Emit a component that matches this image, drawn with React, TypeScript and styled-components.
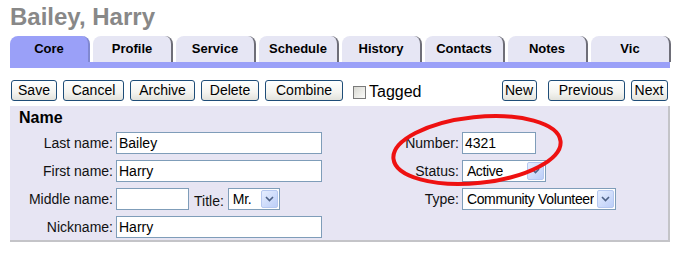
import styled, { createGlobalStyle } from "styled-components";

const GlobalStyle = createGlobalStyle`
  body {
    margin: 0;
    background: #fff;
    font-family: "Liberation Sans", Arial, sans-serif;
  }
`;

const Page = styled.div`
  width: 680px;
  height: 255px;
  padding: 0 0 0 10px;
  box-sizing: border-box;
  position: relative;
`;

const Title = styled.h1`
  margin: 0;
  height: 36px;
  font-size: 24px;
  line-height: 36px;
  font-weight: bold;
  color: #888;
  position: relative;
  top: -1px;
`;

const TabRow = styled.div`
  display: flex;
  gap: 3px;
  height: 26px;
`;

const Tab = styled.div<{ $active?: boolean }>`
  width: 80px;
  box-sizing: border-box;
  border-radius: 8px 8px 0 0;
  background: ${(p) => (p.$active ? "#9aa0f8" : "#e6e6f4")};
  border-right: 2px solid ${(p) => (p.$active ? "#8088d0" : "#6e6e78")};
  display: flex;
  align-items: center;
  justify-content: center;
  font-size: 13px;
  font-weight: bold;
  color: #000;
  padding-bottom: 1px;
`;

const TabBar = styled.div`
  width: 660px;
  height: 6px;
  background: #9aa0f8;
`;

const Toolbar = styled.div`
  display: flex;
  align-items: center;
  margin-top: 12px;
  height: 21px;
`;

const Group = styled.div<{ $gap: number }>`
  display: flex;
  align-items: center;
  gap: ${(p) => p.$gap}px;
`;

const Button = styled.button<{ $w: number }>`
  width: ${(p) => p.$w}px;
  height: 21px;
  padding: 0 0 1px;
  border: 1px solid #1f4d78;
  border-radius: 3px;
  background: linear-gradient(#ffffff, #f4f4f0 60%, #e2e2dc);
  font-family: "Liberation Sans", Arial, sans-serif;
  font-size: 14px;
  color: #000;
`;

const CheckLabel = styled.label`
  display: flex;
  align-items: center;
  gap: 3px;
  font-size: 16px;
  margin-left: 10px;
  margin-top: 3px;
`;

const Box = styled.span`
  width: 11px;
  height: 11px;
  border: 1px solid #7a7a7a;
  background: linear-gradient(135deg, #d8d8d2, #fbfbf9);
`;

const Panel = styled.section`
  position: relative;
  margin-top: 5px;
  width: 660px;
  height: 136px;
  box-sizing: border-box;
  background: #e7e5f3;
  border-right: 2px solid #c4c4c8;
  border-bottom: 2px solid #c4c4c8;
`;

const Heading = styled.h2`
  margin: 0;
  padding: 2px 0 0 9px;
  font-size: 16px;
  line-height: 20px;
  font-weight: bold;
  height: 24px;
`;

const Columns = styled.div`
  display: flex;
`;

const Column = styled.div<{ $w: number }>`
  width: ${(p) => p.$w}px;
  display: flex;
  flex-direction: column;
  gap: 6px;
`;

const Row = styled.div<{ $label: number }>`
  display: grid;
  grid-template-columns: ${(p) => p.$label}px auto;
  column-gap: 3px;
  align-items: center;
  height: 22px;
`;

const Label = styled.span`
  text-align: right;
  font-size: 14px;
  color: #111;
`;

const Inline = styled.div`
  display: flex;
  align-items: center;
`;

const TextBox = styled.div<{ $w: number }>`
  width: ${(p) => p.$w}px;
  height: 22px;
  box-sizing: border-box;
  border: 1px solid #7f9db9;
  background: #fff;
  font-size: 14px;
  line-height: 20px;
  padding-left: 2px;
  color: #000;
`;

const SelectBox = styled.div<{ $w: number }>`
  width: ${(p) => p.$w}px;
  height: 22px;
  box-sizing: border-box;
  border: 1px solid #7f9db9;
  background: #fff;
  display: flex;
  align-items: center;
  justify-content: space-between;
  padding: 1px;
  font-size: 14px;
  color: #000;
  white-space: nowrap;
  span {
    padding-left: 3px;
    letter-spacing: -0.35px;
    overflow: hidden;
  }
`;

const Arrow = styled.div`
  width: 17px;
  height: 18px;
  flex: none;
  box-sizing: border-box;
  border: 1px solid #b6c8f0;
  border-radius: 2px;
  background: linear-gradient(135deg, #e6eeff, #bccef8);
  display: flex;
  align-items: center;
  justify-content: center;
`;

const SmallLabel = styled.span`
  font-size: 14px;
  color: #111;
  margin: 0 4px 0 5px;
  padding-top: 4px;
`;

const Ring = styled.svg`
  position: absolute;
  left: 380px;
  top: 4px;
  pointer-events: none;
`;

const Select = ({ w, value }: { w: number; value: string }) => (
  <SelectBox $w={w}>
    <span>{value}</span>
    <Arrow>
      <svg width="9" height="6" viewBox="0 0 9 6">
        <path d="M1 1 L4.5 4.5 L8 1" fill="none" stroke="#4d6185" strokeWidth="1.6" />
      </svg>
    </Arrow>
  </SelectBox>
);

const tabs = ["Core", "Profile", "Service", "Schedule", "History", "Contacts", "Notes", "Vic"];

export default function App() {
  return (
    <>
      <GlobalStyle />
      <Page>
        <Title>Bailey, Harry</Title>
        <TabRow>
          {tabs.map((t, i) => (
            <Tab key={t} $active={i === 0}>
              {t}
            </Tab>
          ))}
        </TabRow>
        <TabBar />
        <Toolbar>
          <Group $gap={6}>
            <Button $w={46} style={{ marginLeft: 1 }}>Save</Button>
            <Button $w={61}>Cancel</Button>
            <Button $w={65}>Archive</Button>
            <Button $w={58}>Delete</Button>
            <Button $w={78}>Combine</Button>
          </Group>
          <CheckLabel>
            <Box />
            Tagged
          </CheckLabel>
          <Group $gap={0} style={{ marginLeft: 80 }}>
            <Button $w={35}>New</Button>
            <Button $w={77} style={{ marginLeft: 11 }}>Previous</Button>
            <Button $w={37} style={{ marginLeft: 6 }}>Next</Button>
          </Group>
        </Toolbar>
        <Panel>
          <Heading>Name</Heading>
          <Columns>
            <Column $w={370}>
              <Row $label={103}>
                <Label>Last name:</Label>
                <TextBox $w={206}>Bailey</TextBox>
              </Row>
              <Row $label={103}>
                <Label>First name:</Label>
                <TextBox $w={206}>Harry</TextBox>
              </Row>
              <Row $label={103}>
                <Label>Middle name:</Label>
                <Inline>
                  <TextBox $w={73} />
                  <SmallLabel>Title:</SmallLabel>
                  <Select w={52} value="Mr." />
                </Inline>
              </Row>
              <Row $label={103}>
                <Label>Nickname:</Label>
                <TextBox $w={206}>Harry</TextBox>
              </Row>
            </Column>
            <Column $w={290}>
              <Row $label={80}>
                <Label>Number:</Label>
                <TextBox $w={74}>4321</TextBox>
              </Row>
              <Row $label={80}>
                <Label>Status:</Label>
                <Select w={84} value="Active" />
              </Row>
              <Row $label={80}>
                <Label>Type:</Label>
                <Select w={154} value="Community Volunteer" />
              </Row>
            </Column>
          </Columns>
          <Ring width="200" height="80" viewBox="0 0 200 80">
            <ellipse
              cx="87"
              cy="40"
              rx="84"
              ry="33"
              transform="rotate(-6 87 40)"
              fill="none"
              stroke="#ee1111"
              strokeWidth="4"
            />
          </Ring>
        </Panel>
      </Page>
    </>
  );
}
